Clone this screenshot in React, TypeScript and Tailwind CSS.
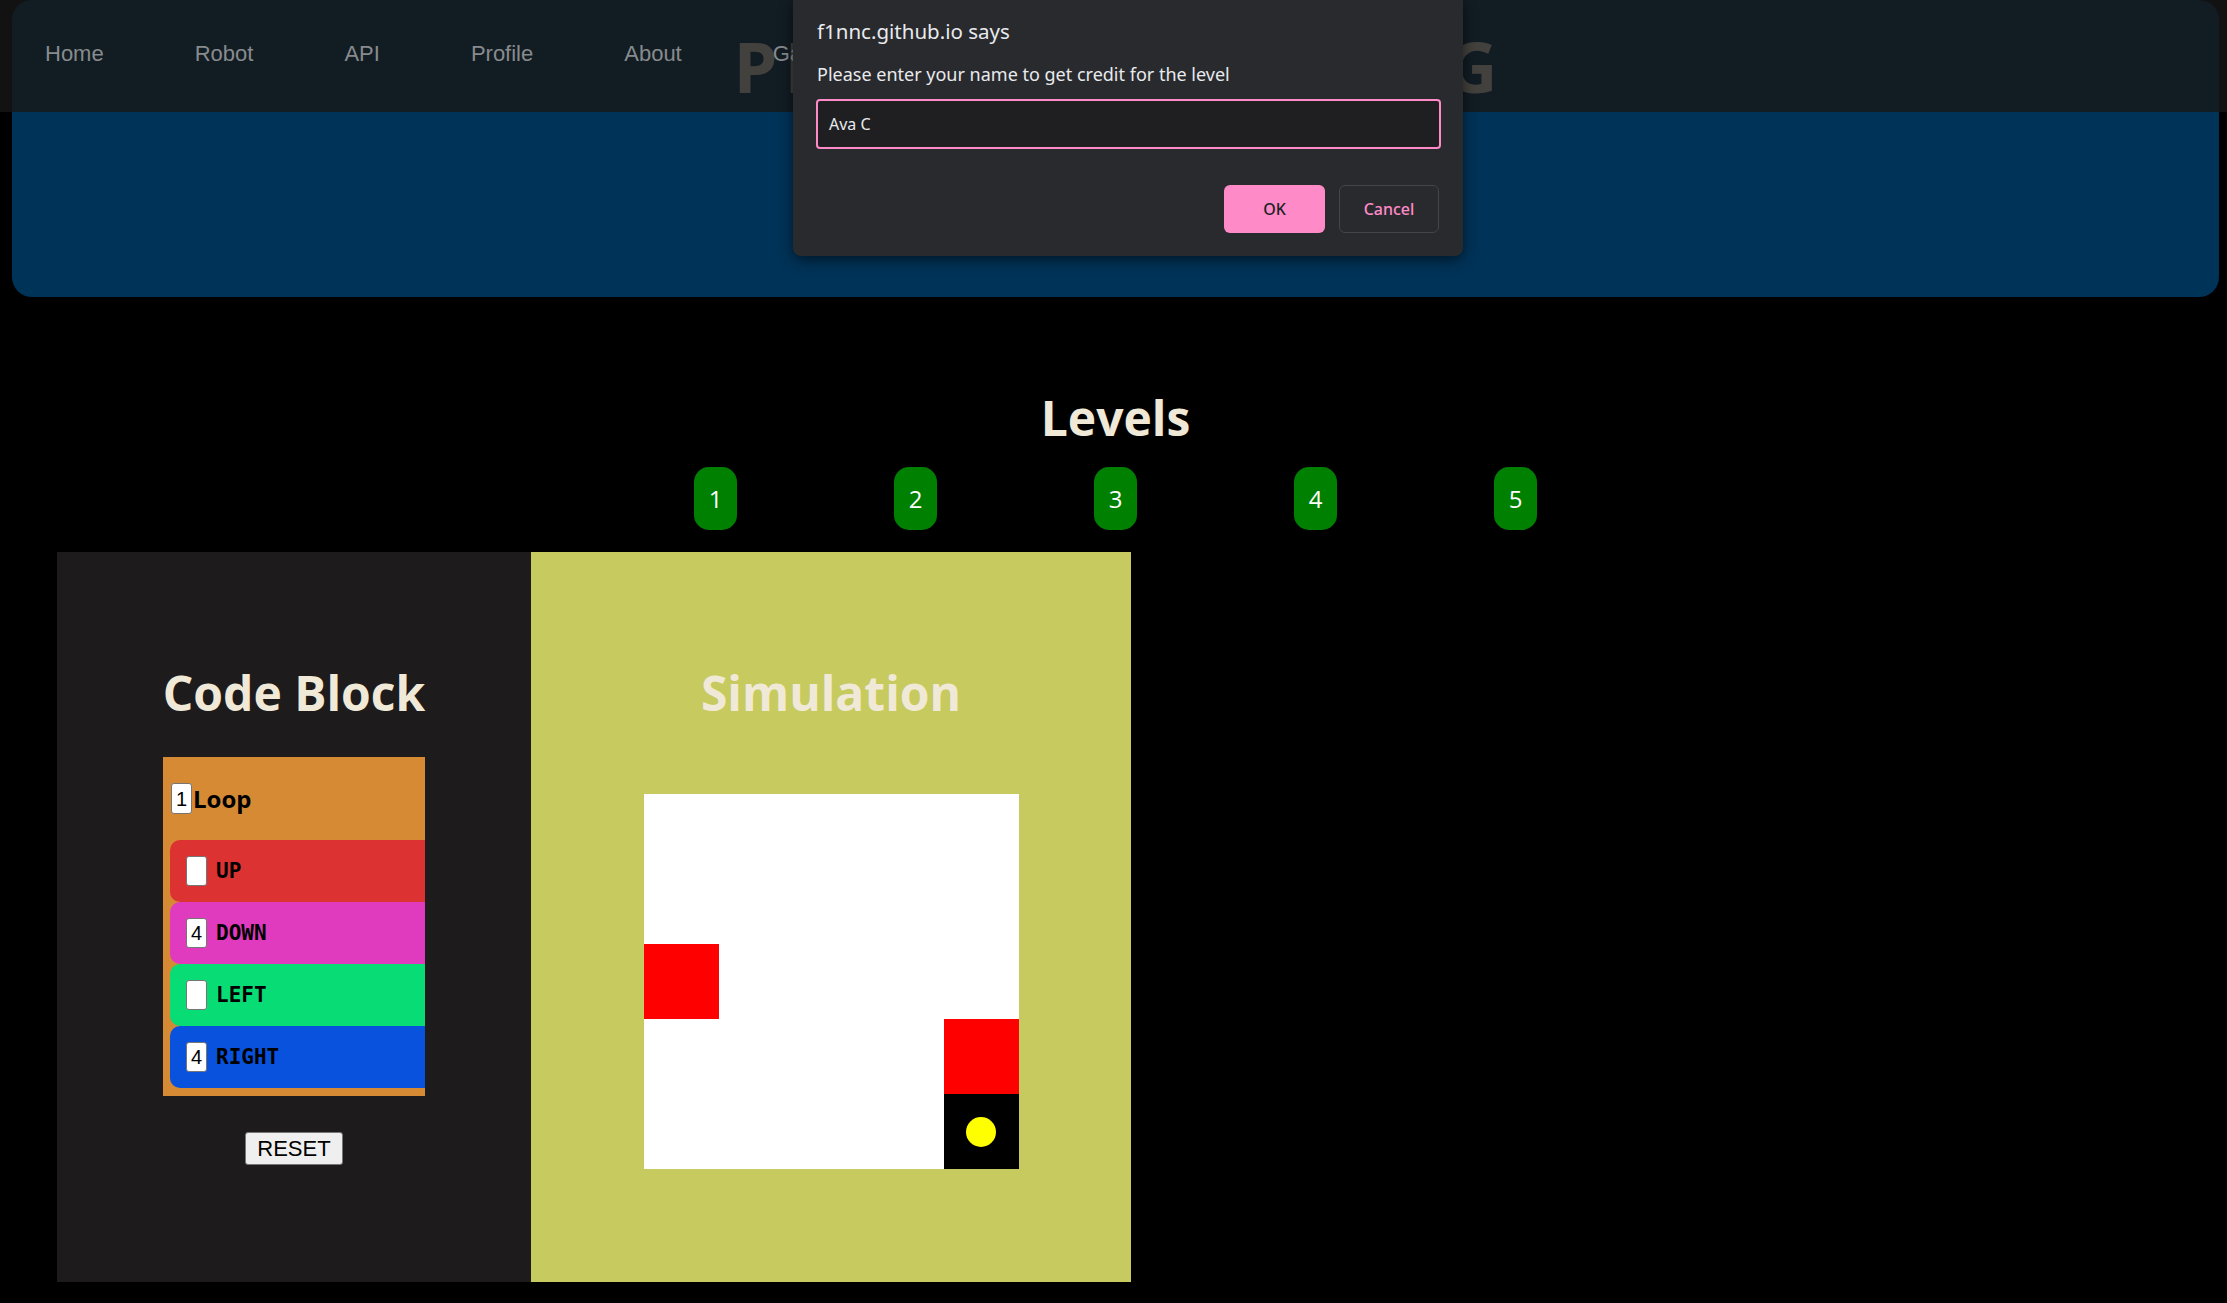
import React from "react";

const rows = [
  { label: "UP", value: "", color: "bg-[#dd3232]" },
  { label: "DOWN", value: "4", color: "bg-[#e03abe]" },
  { label: "LEFT", value: "", color: "bg-[#08dd75]" },
  { label: "RIGHT", value: "4", color: "bg-[#0852dd]" },
];

const grid: (null | "red" | "robot")[][] = [
  [null, null, null, null, null],
  [null, null, null, null, null],
  ["red", null, null, null, null],
  [null, null, null, null, "red"],
  [null, null, null, null, "robot"],
];

export default function App() {
  return (
    <div className="relative w-full min-h-[1303px] bg-black overflow-hidden font-['Open_Sans',sans-serif]">
      {/* Hero */}
      <div className="ml-[12px] mr-[8px] h-[297px] bg-[#003358] rounded-[20px] flex justify-center pt-[31px]">
        <h1 className="text-[70px] leading-[70px] font-bold text-[#f0e9d8] tracking-[7px] pl-[7px]">
          PROBLEM SOLVING
        </h1>
      </div>

      {/* Nav overlay */}
      <nav className="absolute top-0 left-0 right-0 h-[112px] bg-[rgba(22,22,22,0.8)] flex items-center pb-[6px] pl-[45px] gap-[91px] font-['Liberation_Sans',Arial,sans-serif] text-[22px] text-[#878b8d]">
        <span>Home</span>
        <span>Robot</span>
        <span>API</span>
        <span>Profile</span>
        <span>About</span>
        <span>Games</span>
      </nav>

      {/* Main */}
      <div className="ml-[12px] mr-[8px] pt-[88px]">
        <h2 className="text-center text-[48px] leading-[65px] font-bold text-[#f0e9d8]">Levels</h2>
        <div className="mt-[17px] flex justify-center gap-[157px]">
          {[1, 2, 3, 4, 5].map((n) => (
            <div
              key={n}
              className="w-[43px] h-[63px] rounded-[15px] bg-[#008000] text-white text-[24px] flex items-center justify-center"
            >
              {n}
            </div>
          ))}
        </div>

        <div className="mt-[22px] ml-[45px] flex">
          {/* Code Block panel */}
          <div className="w-[474px] h-[730px] bg-[#1d1b1c] flex flex-col items-center pt-[108px]">
            <h2 className="text-[48px] leading-[65px] font-bold text-[#f0e9d8]">Code Block</h2>
            <div className="mt-[32px] w-[262px] h-[339px] bg-[#d68a33] overflow-hidden">
              <div className="h-[83px] flex items-center pl-[8px]">
                <div className="w-[21px] h-[31px] bg-white border border-[#767676] rounded-[3px] flex items-center justify-center text-[20px] font-['Liberation_Sans',Arial,sans-serif] text-black">
                  1
                </div>
                <span className="ml-[1px] text-[24px] font-bold text-black leading-none">Loop</span>
              </div>
              <div className="pl-[7px]">
                {rows.map((r) => (
                  <div key={r.label} className={`h-[62px] w-[270px] rounded-[10px] ${r.color} flex items-center pl-[16px]`}>
                    <div className="w-[21px] h-[30px] bg-white border border-[#767676] rounded-[3px] flex items-center justify-center text-[20px] font-['Liberation_Sans',Arial,sans-serif] text-black">
                      {r.value}
                    </div>
                    <span className="ml-[9px] mt-[1px] text-[21px] font-bold text-black font-['DejaVu_Sans_Mono',monospace]">
                      {r.label}
                    </span>
                  </div>
                ))}
              </div>
            </div>
            <button className="mt-[36px] w-[98px] h-[33px] bg-[#efefef] border border-[#767676] rounded-[3px] text-[22px] leading-none text-black font-['Liberation_Sans',Arial,sans-serif]">
              RESET
            </button>
          </div>

          {/* Simulation panel */}
          <div className="w-[600px] h-[730px] bg-[#c7ca5e] flex flex-col items-center pt-[108px]">
            <h2 className="text-[48px] leading-[65px] font-bold text-[#f0e9d8]">Simulation</h2>
            <div className="mt-[69px] grid grid-cols-[repeat(5,75px)] grid-rows-[repeat(5,75px)] bg-white">
              {grid.flatMap((row, ri) =>
                row.map((c, ci) => (
                  <div
                    key={`${ri}-${ci}`}
                    className={
                      c === "red"
                        ? "bg-[#ff0000]"
                        : c === "robot"
                        ? "bg-black flex items-center justify-center"
                        : "bg-white"
                    }
                  >
                    {c === "robot" && <div className="w-[30px] h-[30px] rounded-full bg-[#ffff00]" />}
                  </div>
                ))
              )}
            </div>
          </div>
        </div>
      </div>

      {/* Prompt dialog */}
      <div className="absolute top-0 left-[793px] w-[670px] h-[256px] bg-[#292a2d] rounded-b-[8px] shadow-[0_4px_14px_rgba(0,0,0,0.55)] px-[23px] pt-[17px] font-['Noto_Sans',sans-serif]">
        <div className="pl-[1px] text-[20.5px] leading-[28px] text-[#e8eaed]">f1nnc.github.io says</div>
        <div className="pl-[1px] mt-[17px] text-[18px] leading-[25px] text-[#e8eaed]">
          Please enter your name to get credit for the level
        </div>
        <div className="mt-[12px] h-[50px] w-[625px] border-2 border-[#ff8ac8] rounded-[4px] bg-[#1f1f22] flex items-center pl-[11px] text-[16px] text-[#e8eaed]">
          Ava C
        </div>
        <div className="mt-[36px] flex justify-end gap-[14px] pr-[1px]">
          <div className="w-[101px] h-[48px] rounded-[6px] bg-[#ff8ac8] flex items-center justify-center text-[16px] font-medium text-[#202124]">
            OK
          </div>
          <div className="w-[100px] h-[48px] rounded-[6px] border border-[#444548] flex items-center justify-center text-[16px] font-medium text-[#ff8ac8]">
            Cancel
          </div>
        </div>
      </div>
    </div>
  );
}
